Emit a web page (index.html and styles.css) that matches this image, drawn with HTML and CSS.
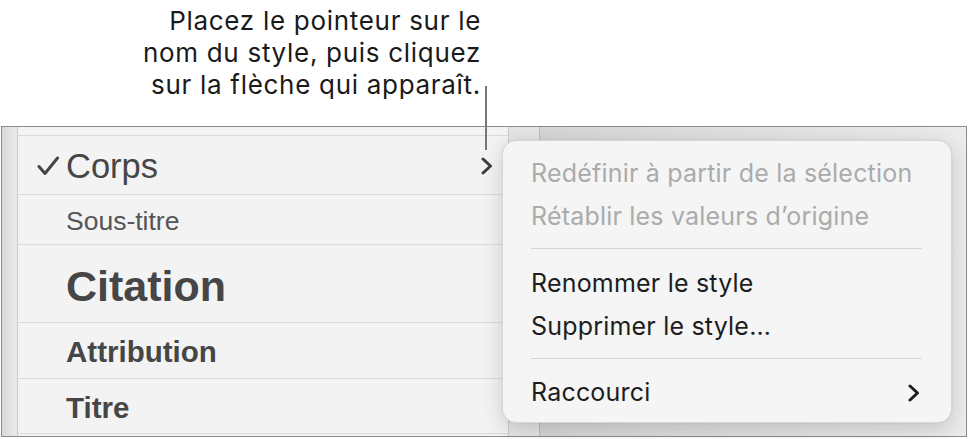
FILE: index.html
```html
<!DOCTYPE html>
<html lang="fr">
<head>
  <meta charset="UTF-8" />
  <meta name="viewport" content="width=device-width, initial-scale=1.0"/>
  <title>Styles de paragraphe</title>
  <link rel="stylesheet" href="styles.css">
</head>
<body>
  <div class="page">
    <p class="note">
      Placez le pointeur sur le<br>
      nom du style, puis cliquez<br>
      sur la flèche qui apparaît.
    </p>
    <div class="callout-line"></div>

    <div class="frame">
      <div class="gutter"></div>
      <div class="list">
        <div class="row row-top"></div>
        <div class="row row-corps">
          <span class="check">
            <svg width="22" height="20" viewBox="0 0 22 20"><path d="M2 10.5 L8 17.5 L20.5 2" fill="none" stroke="#454545" stroke-width="3" stroke-linecap="round" stroke-linejoin="round"/></svg>
          </span>
          <span class="name corps">Corps</span>
          <span class="arrow">
            <svg width="12" height="20" viewBox="0 0 12 20"><path d="M2 3 L9.5 10 L2 17" fill="none" stroke="#3d3d3d" stroke-width="3" stroke-linecap="round" stroke-linejoin="round"/></svg>
          </span>
        </div>
        <div class="row row-sous"><span class="check"></span><span class="name sous">Sous-titre</span></div>
        <div class="row row-citation"><span class="check"></span><span class="name citation">Citation</span></div>
        <div class="row row-attr"><span class="check"></span><span class="name attr">Attribution</span></div>
        <div class="row row-titre"><span class="check"></span><span class="name titre">Titre</span></div>
      </div>
      <div class="strip"></div>
      <div class="rest"></div>
    </div>

    <div class="menu">
      <div class="item disabled">Redéfinir à partir de la sélection</div>
      <div class="item disabled">Rétablir les valeurs d’origine</div>
      <div class="sep"></div>
      <div class="item">Renommer le style</div>
      <div class="item">Supprimer le style…</div>
      <div class="sep sep-2"></div>
      <div class="item item-sub">
        Raccourci
        <svg width="12" height="20" viewBox="0 0 12 20"><path d="M2 3 L9.5 10 L2 17" fill="none" stroke="#1d1d1d" stroke-width="3" stroke-linecap="round" stroke-linejoin="round"/></svg>
      </div>
    </div>
  </div>
</body>
</html>
```

FILE: styles.css
```css
* {
  box-sizing: border-box;
}
body {
  margin: 0;
  background: #fff;
  font-family: Inter, Roboto, sans-serif;
}
.page {
  position: relative;
  width: 968px;
  height: 439px;
  overflow: hidden;
}
.note {
  margin: 0;
  width: 481px;
  height: 126px;
  padding-top: 5px;
  text-align: right;
  font-size: 26px;
  line-height: 32px;
  letter-spacing: 0.7px;
  color: #1a1a1a;
}
.callout-line {
  position: absolute;
  left: 485px;
  top: 86px;
  width: 2px;
  height: 64px;
  background: #777;
  z-index: 2;
}

/* style list */
.frame {
  display: flex;
  margin-left: 1px;
  width: 966px;
  height: 311px;
  border: 1px solid #8c8c8c;
}
.gutter {
  width: 16px;
  background: linear-gradient(to right, #d9d9d9, #ebebeb);
  border-right: 1px solid #c9c9c9;
}
.list {
  width: 491px;
  background: #f3f3f3;
  border-right: 1px solid #cacaca;
  font-family: 'Liberation Sans', Arial, sans-serif;
  color: #464646;
}
.row {
  display: flex;
  align-items: center;
  padding-left: 16px;
  border-bottom: 1px solid #dadada;
}
.row-top { height: 9px; }
.row-corps { height: 59px; padding-top: 2px; }
.row-sous { height: 50px; padding-top: 3px; }
.row-citation { height: 78px; padding-top: 5px; }
.row-attr { height: 56px; padding-top: 2px; }
.row-titre { height: 55px; padding-top: 3px; }
.check {
  display: flex;
  width: 32px;
  padding-left: 3px;
  flex-shrink: 0;
}
.name {
  white-space: nowrap;
}
.corps { font-size: 34.5px; }
.sous { font-size: 26.5px; color: #555; }
.citation { font-size: 43px; font-weight: bold; }
.attr { font-size: 29.5px; font-weight: bold; }
.titre { font-size: 29.5px; font-weight: bold; }
.arrow {
  display: flex;
  margin-left: auto;
  margin-right: 15px;
}
.strip {
  width: 31px;
  background: #e5e5e5;
  border-right: 1px solid #bcbcbc;
}
.rest {
  flex: 1;
  background: linear-gradient(to right, #d6d6d6, #ececec);
}

/* popup menu */
.menu {
  position: absolute;
  left: 502px;
  top: 140px;
  width: 450px;
  height: 283px;
  padding-top: 11px;
  background: #f5f5f5;
  border: 1px solid #d6d6d6;
  border-radius: 14px;
  box-shadow: 0 6px 22px rgba(0,0,0,0.16), 0 0 3px rgba(0,0,0,0.06);
}
.item {
  height: 43px;
  line-height: 43px;
  padding-left: 28px;
  font-size: 25px;
  letter-spacing: 0.2px;
  color: #1d1d1d;
  white-space: nowrap;
}
.item.disabled {
  color: #ababab;
}
.sep {
  height: 1px;
  margin: 10px 29px 13px 28px;
  background: #d5d5d5;
}
.sep-2 {
  margin-bottom: 12px;
}
.item-sub {
  display: flex;
  align-items: center;
  justify-content: space-between;
  padding-right: 31px;
}
```
